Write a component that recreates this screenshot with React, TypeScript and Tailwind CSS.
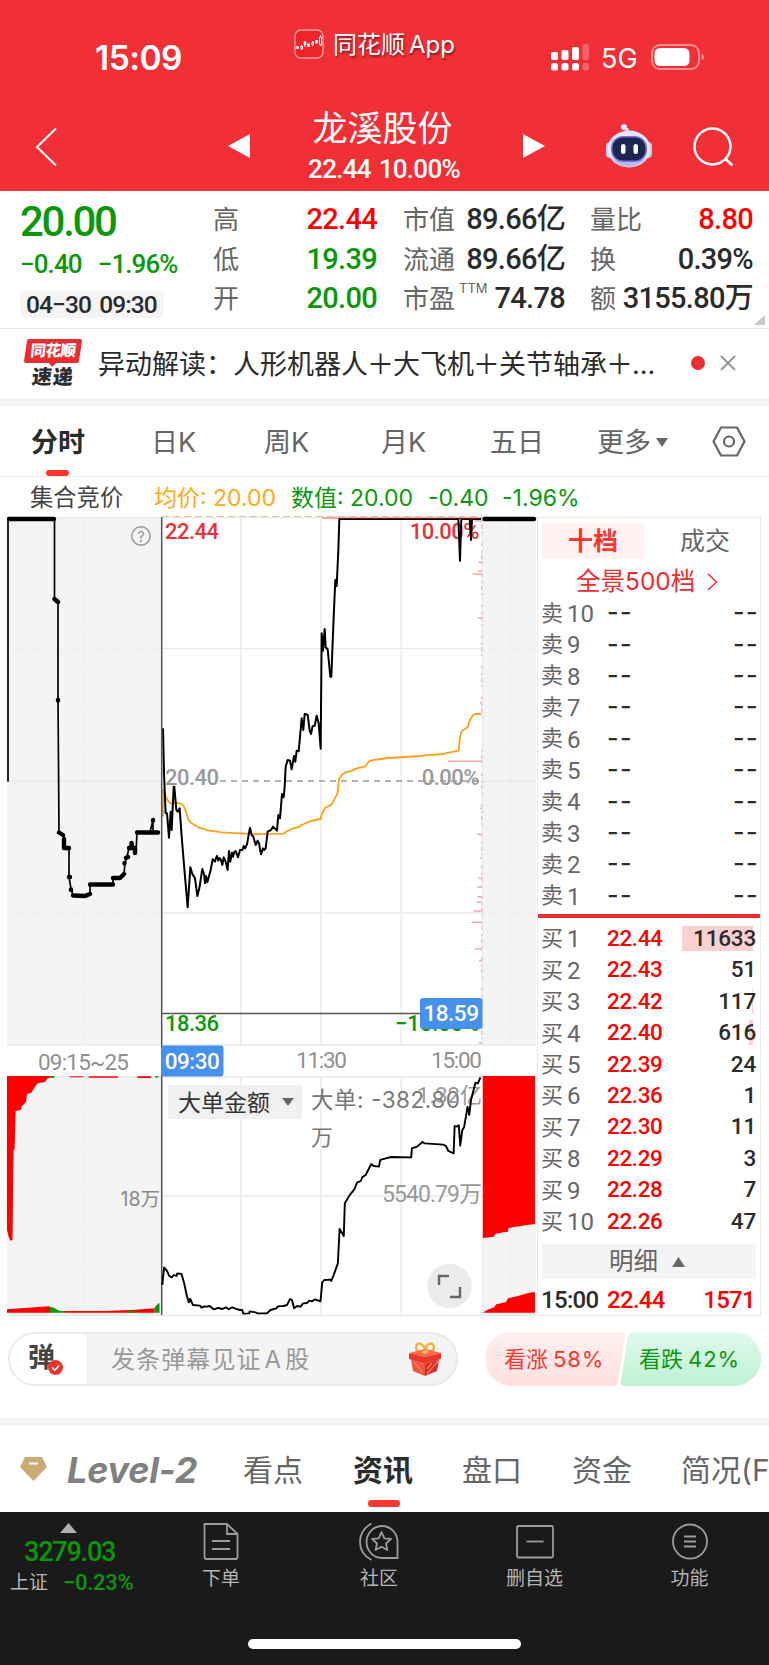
import React from 'react';

interface Level {
  label: string;
  price: string;
  volume: string;
  bar: number;
}

const num = "font-['Roboto','Noto_Sans_CJK_SC',sans-serif] font-medium";
const ui = "font-['Inter','Noto_Sans_CJK_SC',sans-serif]";

const sells = [10, 9, 8, 7, 6, 5, 4, 3, 2, 1];

const buys: Level[] = [
  { label: '1', price: '22.44', volume: '11633', bar: 71 },
  { label: '2', price: '22.43', volume: '51', bar: 0 },
  { label: '3', price: '22.42', volume: '117', bar: 1 },
  { label: '4', price: '22.40', volume: '616', bar: 4 },
  { label: '5', price: '22.39', volume: '24', bar: 0 },
  { label: '6', price: '22.36', volume: '1', bar: 0 },
  { label: '7', price: '22.30', volume: '11', bar: 0 },
  { label: '8', price: '22.29', volume: '3', bar: 0 },
  { label: '9', price: '22.28', volume: '7', bar: 0 },
  { label: '10', price: '22.26', volume: '47', bar: 0 },
];

// Price series, three units per pixel, origin at (155, 510)
const pricePoints =
  '24,655 27,790 32,910 36,910 42,983 47,905 50,960 56,830 58,830 64,900 68,905 74,895 80,980 90,1100 98,1192 106,1072 112,1092 120,1105 127,1158 133,1135 142,1077 147,1092 150,1120 153,1098 157,1117 167,1080 173,1048 180,1055 182,1046 186,1038 190,1052 194,1044 198,1050 202,1065 206,1042 212,1055 218,1080 222,1023 226,1055 231,1028 234,1040 238,1026 242,1023 249,1042 255,1020 262,1020 266,1008 270,1015 276,1003 280,980 285,953 290,975 295,980 302,1005 308,992 312,1000 318,1033 324,1015 328,1020 332,1015 338,965 348,960 354,950 366,962 370,915 375,925 381,852 386,862 389,830 392,770 398,750 405,752 410,778 417,738 421,755 425,722 431,724 440,625 445,660 449,612 458,614 464,662 468,672 473,648 479,648 485,617 491,640 497,716 500,370 504,422 509,357 512,412 518,418 526,500 529,500 536,320 541,210 545,228 550,120 553,27 910,27 915,152 919,27 944,27 948,90 951,27 978,27';

const averagePoints =
  '24,920 25,840 33,862 42,877 50,880 72,879 82,883 88,892 94,908 100,928 110,940 130,952 160,961 200,967 250,970 300,972 385,971 396,964 410,957 433,950 440,945 465,934 480,930 497,927 501,910 510,894 530,883 540,865 548,848 552,808 560,795 572,787 592,782 605,775 632,769 637,760 642,754 655,750 700,744 795,738 810,736 865,732 880,728 911,722 914,690 919,665 925,660 938,652 945,630 955,614 963,612 978,612';

// Volume bars along the right edge: [y, length]
const edgeBars = [
  [33, 22], [157, 10], [183, 12], [192, 28], [323, 12], [578, 7], [754, 103],
  [895, 6], [973, 15], [1045, 7], [1105, 10], [1132, 14], [1160, 14], [1177, 16],
  [1203, 25], [1237, 31], [1317, 21], [1352, 9], [1598, 10],
];

const flowPoints =
  '467,735 472,682 480,692 487,708 494,712 500,705 508,708 510,700 522,702 530,730 537,765 543,787 547,776 555,795 575,797 580,803 588,799 596,800 603,798 615,808 628,804 640,807 650,802 658,808 668,802 680,807 690,810 697,810 700,821 717,820 718,814 735,817 740,820 768,820 778,810 795,805 800,799 815,798 826,795 834,777 840,780 846,805 855,798 865,800 872,790 883,789 890,782 898,784 906,778 922,784 927,727 933,720 950,719 953,723 960,705 972,670 977,567 989,588 992,490 1005,467 1020,447 1027,428 1038,423 1042,412 1052,405 1060,388 1068,372 1075,378 1090,380 1094,360 1110,355 1125,351 1183,352 1185,325 1200,320 1215,306 1222,310 1275,314 1283,318 1290,333 1305,340 1308,258 1314,260 1320,256 1324,317 1330,270 1335,262 1340,232 1345,200 1350,225 1355,180 1360,160 1368,128 1375,130 1382,112';

const Robot = () => (
  <svg className="w-12 h-11" viewBox="0 0 48 44">
    <path d="M22 9V4" stroke="#dfe3fb" strokeWidth="3" />
    <circle cx="19" cy="3" r="3" fill="#dfe3fb" />
    <rect x="1" y="18" width="8" height="16" rx="4" fill="#c3c8ef" />
    <rect x="39" y="18" width="8" height="16" rx="4" fill="#c3c8ef" />
    <ellipse cx="24" cy="25" rx="21.5" ry="18.5" fill="#e4e6fa" />
    <path d="M6 34Q24 52 42 34Q24 42 6 34" fill="#b6bbe6" />
    <rect x="6" y="12" width="36" height="26" rx="12" fill="#7b6ee0" />
    <rect x="7.5" y="13.5" width="33" height="23" rx="10.5" fill="#1b2750" />
    <rect x="16" y="20" width="4.5" height="10" rx="2.2" fill="#fff" />
    <rect x="28.500" y="20" width="4.500" height="10" rx="2.2" fill="#fff" />
  </svg>
);

const Header = () => (
  <header className="h-[191px] bg-[#f12f37] text-white">
    <div className="flex h-[90px]">
      <div className={`${ui} w-[198px] pl-[95px] pt-[38px] text-[33.5px] leading-10 font-semibold tracking-[-0.5px]`}>15:09</div>
      <div className="flex w-[353px] items-start pl-24 pt-[29px]">
        <svg className="w-[30px] h-[30px]" viewBox="0 0 30 30">
          <rect x="1" y="1" width="28" height="28" rx="6" fill="#ee2429" stroke="#fa9a9d" strokeWidth="1.500" />
          <g fill="#fff" stroke="#fff" strokeWidth="1">
            <path d="M3.500 17V20M11 12.500V16M14.500 14.500V18M22.500 11V14.500" strokeWidth="2.500" />
            <path d="M7.500 16V21M11 12V18M18.500 12V17M26.500 6V17" strokeWidth="1" />
            <path d="M7 17h1.500v3H7zM18 13h1.500v3H18zM25.500 8h2v8h-2z" fill="#ee2429" />
          </g>
        </svg>
        <div className={`${ui} ml-[9px] text-[24px] leading-8 [text-shadow:1px_2px_2px_rgba(0,0,0,0.45)]`}>同花顺<span className="ml-1">App</span></div>
      </div>
      <svg className="mt-[43px] w-10 h-7" viewBox="0 0 40 28" fill="#fff">
        <rect x="0" y="9" width="7" height="8" rx="2" />
        <rect x="10.500" y="7" width="7" height="10" rx="2" />
        <rect x="21" y="4" width="7" height="13" rx="2" />
        <rect x="31.500" y="1" width="6.500" height="16" rx="2" opacity=".25" />
        <rect x="0" y="20" width="7" height="7.500" rx="2.500" />
        <rect x="10.500" y="20" width="7" height="7.500" rx="2.500" />
        <rect x="21" y="20" width="7" height="7.500" rx="2.500" />
        <rect x="31.500" y="20" width="6.500" height="7.500" rx="2.500" opacity=".25" />
      </svg>
      <div className={`${ui} ml-[10px] w-[50px] pt-[43px] text-[27px] leading-8`}>5G</div>
      <svg className="mt-[44px] w-[55px] h-[26px]" viewBox="0 0 55 26">
        <rect x="1" y="1" width="47" height="24" rx="8" fill="none" stroke="#fff" strokeOpacity=".45" strokeWidth="2" />
        <rect x="3.500" y="4" width="35" height="18" rx="5.500" fill="#fff" />
        <path d="M50.500 9.500Q53 11 53 13T50.500 16.500Z" fill="#fff" opacity=".45" />
      </svg>
    </div>
    <div className="flex h-[101px] items-start">
      <svg className="ml-[34px] mt-[37px] w-6 h-10" viewBox="0 0 24 40" fill="none" stroke="#fff" strokeWidth="2">
        <path d="M22 1.500L3 20L22 38.500" />
      </svg>
      <svg className="ml-[170px] mt-[44px] w-[22px] h-6" viewBox="0 0 22 24" fill="#fff"><path d="M0 12L22 0V24Z" /></svg>
      <div className="w-[273px] pr-[5px] text-center">
        <div className={`${ui} -ml-[3px] pt-[14px] text-[35px] leading-[48px]`}>龙溪股份</div>
        <div className={`${num} text-[26px] leading-[34px] tracking-[-0.7px] [word-spacing:2px]`}>22.44 10.00%</div>
      </div>
      <svg className="mt-[44px] w-[22px] h-6" viewBox="0 0 22 24" fill="#fff"><path d="M22 12L0 0V24Z" /></svg>
      <div className="ml-[60px] mt-[34px]"><Robot /></div>
      <svg className="ml-[40px] mt-[36px] w-[42px] h-[42px]" viewBox="0 0 42 42" fill="none" stroke="#fff" strokeWidth="2.500">
        <circle cx="19.500" cy="20.500" r="18" />
        <path d="M32 32.500L39.500 39.500" />
      </svg>
    </div>
  </header>
);

interface StatProps {
  label: React.ReactNode;
  value: string;
  color?: string;
}

const Stat = ({ label, value, color = 'text-[#2b2b2b]' }: StatProps) => (
  <div className="flex h-[39.5px] items-center justify-between">
    <span className={`${ui} text-[26px] text-[#666]`}>{label}</span>
    <span className={`${num} text-[29px] tracking-[-0.7px] ${color}`}>{value}</span>
  </div>
);

const Quote = () => (
  <section className="relative flex h-[138px] border-b border-[#e6e6e6]">
    <div className={`${num} w-[213px] pl-5 text-[#0a980a]`}>
      <div className="mt-[7px] text-[42px] leading-[48px] tracking-[-2.3px]">20.00</div>
      <div className="mt-[2px] flex gap-4 text-[26px] leading-8 tracking-[-0.9px]"><span>−0.40</span><span>−1.96%</span></div>
      <div className="mt-[11px] h-[27px] w-36 rounded-md bg-[#f4f4f4] pl-[6px] text-[24.500px] leading-[28px] tracking-[-0.9px] [word-spacing:3px] text-[#2b2b2b]">04−30 09:30</div>
    </div>
    <div className="w-[164px] pt-[9px]">
      <Stat label="高" value="22.44" color="text-[#ff0000]" />
      <Stat label="低" value="19.39" color="text-[#0a980a]" />
      <Stat label="开" value="20.00" color="text-[#0a980a]" />
    </div>
    <div className="ml-[26px] w-[162px] pt-[9px]">
      <Stat label="市值" value="89.66亿" />
      <Stat label="流通" value="89.66亿" />
      <Stat label={<>市盈<sup className="relative -top-[15px] ml-1 text-[13px] leading-none">TTM</sup></>} value="74.78" />
    </div>
    <div className="ml-[25px] w-[163px] pt-[9px]">
      <Stat label="量比" value="8.80" color="text-[#ff0000]" />
      <Stat label="换" value="0.39%" />
      <div className="tracking-[-1px]"><Stat label="额" value="3155.80万" /></div>
    </div>
    <svg className="absolute right-[4px] bottom-[3px] w-[11px] h-[10px]" viewBox="0 0 11 10"><path d="M11 0V10H0Z" fill="#c8c8c8" /></svg>
  </section>
);

const News = () => (
  <section className="flex h-[77px] items-start border-b-8 border-[#f4f4f4]">
    <div className={`${ui} relative ml-6 mt-[10px] w-[58px] text-center`}>
      <svg className="absolute left-0 top-0 w-[58px] h-7" viewBox="0 0 58 28"><path d="M5 0H56Q58 0 58 2L55 22Q55 24 53 24H32L28 28L25 24H2Q0 24 0 22L3 2Q3 0 5 0Z" fill="#e92e32" /></svg>
      <div className="relative -skew-x-6 text-[15.5px] leading-6 font-black tracking-[-0.5px] text-white">同花顺</div>
      <div className="-skew-x-6 text-[20px] leading-[28px] font-black tracking-[1px] text-[#2b2b2b]">速递</div>
    </div>
    <div className={`${ui} ml-4 mt-4 w-[576px] text-[27px] leading-10 whitespace-nowrap text-[#2b2b2b]`}>
      异动解读：人形机器人<span className="-mx-px">＋</span>大飞机<span className="-mx-px">＋</span>关节轴承<span className="-mx-px">＋</span>...
    </div>
    <span className="ml-[17px] mt-[27px] h-[14px] w-[14px] rounded-full bg-[#ea2e31]" />
    <svg className="ml-[15px] mt-[26px] w-4 h-4" viewBox="0 0 16 16" stroke="#999" strokeWidth="2"><path d="M1 1L15 15M15 1L1 15" /></svg>
  </section>
);

const PeriodTabs = () => (
  <nav className={`${ui} flex h-[71px] items-start border-b border-[#ebebeb] text-[27px] leading-[73px] text-[#666]`}>
    <div className="relative ml-[31px] h-[70px] w-[120px] font-bold text-[#2b2b2b]">
      分时
      <span className="absolute left-[15px] bottom-0 h-[6px] w-[23px] rounded-sm bg-[#fb3730]" />
    </div>
    <div className="w-[113px]">日K</div>
    <div className="w-[117px]">周K</div>
    <div className="w-[109px]">月K</div>
    <div className="w-[107px]">五日</div>
    <div className="flex w-[115px] items-center">更多<svg className="ml-[5px] w-3 h-[9px]" viewBox="0 0 12 9"><path d="M0 0H12L6 9Z" fill="#666" /></svg></div>
    <svg className="mt-[20px] w-[34px] h-[31px]" viewBox="0 0 34 31" fill="none" stroke="#666" strokeWidth="2.200">
      <path d="M9 1.500H25L32.500 15.500L25 29.500H9L1.500 15.500Z" strokeLinejoin="round" />
      <circle cx="17" cy="15.500" r="5" />
    </svg>
  </nav>
);

const Legend = () => (
  <div className={`${ui} flex h-[39px] text-[23px] leading-[42px] whitespace-nowrap text-[#0a980a]`}>
    <span className="ml-[30px] w-[124px] text-[23.3px] text-[#444]">集合竞价</span>
    <span className="w-[137px] text-[#ffaa14]">均价: 20.00</span>
    <span className="w-[137px]">数值: 20.00</span>
    <span className="w-[74px]">-0.40</span>
    <span>-1.96%</span>
  </div>
);

const Chart = () => (
  <svg className="w-[537px] h-[803px] shrink-0" viewBox="0 516 537 803">
    <rect x="7" y="517" width="154" height="528" fill="#f4f4f4" />
    <rect x="483" y="517" width="53" height="528" fill="#f4f4f4" />
    <rect x="7" y="1077" width="154" height="238" fill="#f4f4f4" />
    <rect x="483" y="1077" width="53" height="238" fill="#f4f4f4" />
    <g stroke="#e9e9e9" strokeWidth="1.300" fill="none">
      <path d="M7 517.500H537M7 781H161M483 781H536M162 648.500H482M162 913H482M7 1045H536M7 1077H536M162 1196H482M7 1315.500H536" />
      <path d="M240.700 517V1045M321 517V1045M401.300 517V1045M482.500 517V1045M240.700 1077V1315M321 1077V1315M401.300 1077V1315M482.500 1077V1315" />
      <path d="M84 517V1045M510.700 517V1045M84 1077V1315M510.700 1077V1315M7 650H161M7 914H161M483 650H536M483 914H536M7 1195H161" strokeDasharray="2 3" />
    </g>
    <path d="M162 516.500H482" stroke="#dcc59c" strokeWidth="1.200" strokeDasharray="7 4" />
    <path d="M220 781H482" stroke="#999" strokeWidth="1.300" strokeDasharray="6 5" />

    <g className={num} fontSize="22" letterSpacing="-0.5">
      <text x="165" y="539" fill="#ee3134">22.44</text>
      <text x="479" y="539" fill="#ee3134" textAnchor="end">10.00%</text>
      <text x="165" y="785" fill="#999">20.40</text>
      <text x="479" y="785" fill="#999" textAnchor="end">0.00%</text>
      <text x="165" y="1031" fill="#0a980a">18.36</text>
      <text x="479" y="1031" fill="#0a980a" textAnchor="end" textLength="84">−10.00%</text>
    </g>

    <g stroke="#000" fill="none" strokeLinejoin="round" strokeLinecap="round">
      <path d="M8 781V519H54.500V599L58 601V700L59 832L64 836V848H69V877L71 889L73 895L85 896L90 894V884H113V878H120L124 874L125 863L127 857L129 848L132 842L136 853L137 832H150L153 820V832H159" strokeWidth="1.700" />
      <path d="M9 519H54M54.500 599L58 602M58 700V700.500M59 832.500L63 835M64 839V848H69M69 877H70M71 889.500V890M73 895.500L85 896L90 894M90 884.500H113M113 878H120L124 874M124.500 863V863.500M126 858L128 857M129 848H135V853M131.500 843V843.500M137 832.500H158M153 820V820.500M484.500 519H534" strokeWidth="4.400" />
    </g>

    <path d="M322 518H482" stroke="#f8a9ab" strokeWidth="2" />
    <g transform="translate(155 510) scale(.33333)" fill="none">
      <path d={edgeBars.map(([y, length]) => `M${981 - length} ${y}H981`).join('')} stroke="#f7a6a8" strokeWidth="4.500" />
      <path d="M980 30V620M980 720V1610" stroke="#f7b4b6" strokeWidth="4" strokeDasharray="6 8 12 10 4 30 8 14" />
      <polyline points={averagePoints} stroke="#ff9f1a" strokeWidth="5.500" strokeLinejoin="round" />
      <polyline points={pricePoints} stroke="#000" strokeWidth="6" strokeLinejoin="round" />
    </g>
    <path d="M340 518.500H480" stroke="#6e1014" strokeWidth="1" />

    <path d="M161.700 517V1315M162 1013.500H420" stroke="#555" strokeWidth="1.500" />
    <rect x="420" y="998" width="62.500" height="31" rx="3" fill="#4690ee" />
    <rect x="161" y="1045.500" width="62.500" height="31" rx="3" fill="#4690ee" />
    <g className={num} fontSize="22.500" letterSpacing="-0.5">
      <text x="451" y="1021" fill="#fff" textAnchor="middle">18.59</text>
      <text x="192" y="1069" fill="#fff" textAnchor="middle">09:30</text>
    </g>
    <g className="font-['Roboto',sans-serif]" fontSize="22.500" fill="#8f8f8f">
      <text x="38" y="1070" textLength="91">09:15~25</text>
      <text x="296" y="1068" textLength="51">11:30</text>
      <text x="431" y="1068" textLength="51">15:00</text>
    </g>

    <g transform="translate(0 1040) scale(.3476 .33333)">
      <path d="M20 108H150L148 112L135 116L130 126L108 130L100 142L90 158L78 162L75 185L62 200L60 210L45 213L42 330H39L36 600L30 602L25 590L20 570Z" fill="#ff0000" />
      <path d="M20 818V808L140 799L146 802V818ZM185 818V813L300 813L390 809L445 805V818ZM200 109H240V112H200ZM255 109H340V113H255ZM395 109H435V114H395Z" fill="#ff0000" />
      <path d="M144 800L155 803L170 812L186 814V818H144ZM445 802L456 790H459V818H445ZM368 813H388V818H368ZM144 108H156V114H148ZM445 108H457L450 115Z" fill="#0a980a" />
      <path d="M1389 108H1539V553L1520 554L1500 558L1475 562L1462 565V575L1440 578L1425 582L1420 590L1389 594Z" fill="#ff0000" />
      <path d="M1389 818L1405 808L1420 803L1428 793L1455 787L1462 775L1490 768L1510 762L1530 757H1539V818Z" fill="#ff0000" />
    </g>
    <text className={ui} x="160" y="1206" fontSize="19.500" fill="#888" textAnchor="end">18万</text>

    <rect x="168" y="1085" width="134" height="34" rx="3" fill="#f0f0f0" />
    <g className={ui}>
      <text x="178" y="1111" fontSize="23" fill="#333">大单金额</text>
      <text x="311" y="1107.500" fontSize="22.500" fill="#777" textLength="149">大单: -382.80</text>
      <text x="311" y="1144.500" fontSize="22" fill="#777">万</text>
    </g>
    <path d="M282 1098H294L288 1106Z" fill="#666" />
    <g className="font-['Roboto','Noto_Sans_CJK_SC',sans-serif]" fontSize="23" fill="#999" textAnchor="end">
      <text x="482" y="1103" fontSize="22">1.32亿</text>
      <text x="482" y="1202" textLength="100">5540.79万</text>
    </g>
    <polyline transform="translate(0 1040) scale(.3476 .33333)" points={flowPoints} fill="none" stroke="#000" strokeWidth="5.500" strokeLinejoin="round" />
    <circle cx="449.500" cy="1286" r="22.200" fill="#ebebeb" />
    <path d="M439 1285V1276H449M460 1287V1297H450" fill="none" stroke="#666" strokeWidth="2.400" />

    <circle cx="141" cy="536" r="9.200" fill="none" stroke="#999" strokeWidth="1.500" />
    <text className={ui} x="141" y="541.500" fontSize="15" fill="#999" textAnchor="middle">?</text>
  </svg>
);

const OrderBook = () => (
  <aside className={`${ui} mt-px h-[799px] w-[224px] border border-[#e8e8e8] pt-[5px] text-[23px] text-[#666]`}>
    <div className="ml-1 flex text-center text-[25px] leading-9">
      <div className="w-[102px] shrink-0 rounded bg-[#fff2f1] font-bold text-[#fb3730]">十档</div>
      <div className="w-[124px] shrink-0 pr-[2px]">成交</div>
    </div>
    <div className="ml-[38px] flex h-[38.300px] items-center pt-[7px] text-[24.5px] text-[#ee2d2d]">
      全景500档
      <svg className="ml-3 w-[11px] h-[18px]" viewBox="0 0 11 18" fill="none" stroke="#ee2d2d" strokeWidth="1.500"><path d="M1 1L9.500 9L1 17" /></svg>
    </div>
    {sells.map((level) => (
      <div key={level} className="flex h-[31.4px] items-center pl-[3px] pr-px">
        <span className="w-[26px] text-[22px]">卖</span>
        <span className="w-[40px] pt-[2px] font-['Roboto'] text-[24px]">{level}</span>
        <span className="text-[25px] font-medium tracking-[1.5px] text-[#2b2b2b]">--</span>
        <span className="ml-auto text-[25px] font-medium tracking-[1.5px] text-[#2b2b2b]">--</span>
      </div>
    ))}
    <div className="mt-[3px] mb-[5px] h-1 bg-[#ea2f32]" />
    {buys.map((row) => (
      <div key={row.label} className="relative flex h-[31.4px] items-center pl-[3px] pr-1">
        {row.bar > 0 && <span className="absolute right-[7px] top-[3px] h-[25px] bg-[#fbd0d1]" style={{ width: row.bar }} />}
        <span className="w-[26px] text-[22px]">买</span>
        <span className="w-[40px] pt-px font-['Roboto'] text-[24px]">{row.label}</span>
        <span className={`${num} text-[22.5px] tracking-[-0.4px] text-[#ff0000]`}>{row.price}</span>
        <span className={`${num} relative ml-auto text-[22.5px] tracking-[-0.2px] text-[#2b2b2b]`}>{row.volume}</span>
      </div>
    ))}
    <div className="mx-1 mt-[7px] flex h-[35px] items-center justify-center gap-[14px] bg-[#f4f4f4] pr-1 text-[24.5px]">
      明细
      <svg className="w-[13px] h-[10px]" viewBox="0 0 13 10"><path d="M0 10H13L6.500 0Z" fill="#666" /></svg>
    </div>
    <div className={`${num} flex pl-[3px] pr-[5px] pt-px text-[24px] leading-10 tracking-[-0.7px] text-[#ff0000]`}>
      <span className="w-[66px] text-[#2b2b2b]">15:00</span>
      <span>22.44</span>
      <span className="ml-auto">1571</span>
    </div>
  </aside>
);

const Gift = () => (
  <svg className="w-8 h-[34px]" viewBox="0 0 32 34">
    <path d="M16 9Q7 11 7 5Q8 0 12 2Q16 4 16 9Q16 4 20 2Q24 0 25 5Q25 11 16 9Z" fill="none" stroke="#f4b53c" strokeWidth="2.500" />
    <path d="M0 11L16 7L32 11L16 15Z" fill="#f9694c" />
    <path d="M0 11L16 15L32 11V17L16 22L0 17Z" fill="#e8382c" />
    <path d="M2 17.500L16 22V34L4 29Z" fill="#f2543d" />
    <path d="M30 17.500L16 22V34L28 29Z" fill="#d92d27" />
    <path d="M18 32L29 19M18 27L23 21M5 20L14 31" stroke="#ff8159" strokeWidth="1.200" />
    <path d="M12 10L16 8L20 10L16 12Z" fill="#f9c64f" />
  </svg>
);

const Barrage = () => (
  <section className={`${ui} flex h-[107px] border-b-8 border-[#f4f4f4] pl-2 pt-[13px]`}>
    <div className="flex h-[54px] w-[450px] items-center overflow-hidden rounded-full border-2 border-[#eaeaea] bg-[#f4f4f4]">
      <div className="relative h-full w-[76px] bg-white pl-[18px] text-[27px] leading-[47px] font-bold text-[#444]">
        弹
        <svg className="absolute left-[38px] top-[26px] w-[15px] h-[15px]" viewBox="0 0 15 15"><circle cx="7.500" cy="7.500" r="7.500" fill="#f0322f" /><path d="M4 7.500L6.800 10.300L11 5.500" fill="none" stroke="#fff" strokeWidth="1.600" /></svg>
      </div>
      <span className="ml-[25px] w-[298px] pt-[2px] text-[24px] tracking-[1.1px] text-[#999]">发条弹幕见证<span className="mx-[3px]">A</span>股</span>
      <Gift />
    </div>
    <div className="relative ml-[27px] flex h-[54px] w-[276px] text-[22px] leading-[55px]">
      <svg className="absolute inset-0 w-[276px] h-[54px]" viewBox="0 0 276 54">
        <defs>
          <linearGradient id="rise" x2="0" y2="1"><stop stopColor="#fff0ef" /><stop offset="1" stopColor="#fee0de" /></linearGradient>
          <linearGradient id="fall" x2="0" y2="1"><stop stopColor="#e2f9ed" /><stop offset="1" stopColor="#bdf1d4" /></linearGradient>
        </defs>
        <path d="M27 0H137Q141 0 140 4L133 50Q132 54 128 54H27A27 27 0 0 1 27 0Z" fill="url(#rise)" />
        <path d="M149 0H249A27 27 0 0 1 249 54H139Q135 54 136 50L143 4Q144 0 149 0Z" fill="url(#fall)" />
      </svg>
      <span className="relative ml-[19px] w-[135px] text-[#fb3730]">看涨<span className="ml-[5px] tracking-[0.9px]">58%</span></span>
      <span className="relative text-[#0a980a]">看跌<span className="ml-[5px] tracking-[0.9px]">42%</span></span>
    </div>
  </section>
);

const InfoTabs = () => (
  <nav className={`${ui} flex h-[86px] overflow-hidden text-[30px] leading-[88px] whitespace-nowrap text-[#666]`}>
    <svg className="ml-5 mt-[31px] w-[27px] h-6 shrink-0" viewBox="0 0 27 24"><path d="M5 0H22L27 10L13.500 24L0 10Z" fill="#cbaa74" /><path d="M9 6.500H18" stroke="#fff" strokeWidth="2" /></svg>
    <div className="ml-5 w-[176px] shrink-0 text-[36px] font-bold italic tracking-[-0.2px] text-[#808080]">Level-2</div>
    <div className="w-[110px] shrink-0">看点</div>
    <div className="relative w-[109px] shrink-0 font-bold text-[#2b2b2b]">
      资讯
      <span className="absolute left-[15px] top-[74px] h-[7px] w-8 rounded-sm bg-[#fb3730]" />
    </div>
    <div className="w-[110px] shrink-0">盘口</div>
    <div className="w-[109px] shrink-0">资金</div>
    <div className="shrink-0">简况(F10)</div>
  </nav>
);

const Footer = () => (
  <footer className={`${ui} h-[153px] bg-[#1a1a1a] text-[19px] text-[#b5b5b5]`}>
    <div className="flex h-[127px] pt-[11px]">
      <div className={`${num} w-[142px]`}>
        <svg className="ml-[60px] w-[17px] h-[10px]" viewBox="0 0 17 10"><path d="M0 10H17L8.500 0Z" fill="#b0b0b0" /></svg>
        <div className="ml-6 mt-[3px] text-[27px] leading-8 tracking-[-1.2px] text-[#0a980a]">3279.03</div>
        <div className="ml-[10px] mt-px flex leading-[28px]">
          <span className="w-[53px] font-normal">上证</span>
          <span className="text-[22px] tracking-[-0.3px] text-[#0a980a]">−0.23%</span>
        </div>
      </div>
      <div className="flex w-[158px] flex-col items-center">
        <svg className="w-9 h-[38px]" viewBox="0 0 36 38" fill="none" stroke="#9b9b9b" strokeWidth="1.800">
          <path d="M1.500 1H24L34.500 11V34Q34.500 36 32.500 36H3.500Q1.500 36 1.500 34ZM24 1V11H34.500M9 18H27M9 26H27" />
        </svg>
        <span className="mt-1 leading-7">下单</span>
      </div>
      <div className="flex w-[158px] flex-col items-center">
        <svg className="w-10 h-[38px]" viewBox="0 0 40 38" fill="none" stroke="#9b9b9b" strokeWidth="1.800">
          <path d="M12.500 .500Q1 7 1 19T12.500 37M38.500 35V18A15.500 16 0 1 0 23 35Z" />
          <path d="M22.500 9L25.300 15.300L32 16L27 20.500L28.400 27L22.500 23.700L16.600 27L18 20.500L13 16L19.700 15.300Z" strokeLinejoin="round" />
        </svg>
        <span className="mt-1 leading-7">社区</span>
      </div>
      <div className="flex w-[153px] flex-col items-center">
        <svg className="w-[38px] h-[38px]" viewBox="0 0 38 38" fill="none" stroke="#9b9b9b" strokeWidth="1.800">
          <rect x="1" y="3" width="36" height="31.500" rx="1.500" />
          <path d="M10.500 18.500H27.500" />
        </svg>
        <span className="mt-1 leading-7">删自选</span>
      </div>
      <div className="flex w-[157px] flex-col items-center">
        <svg className="w-[38px] h-[38px]" viewBox="0 0 38 38" fill="none" stroke="#9b9b9b" strokeWidth="1.800">
          <circle cx="19" cy="18.500" r="17" />
          <path d="M13 13.500H25M13 18.500H25M13 23.500H25" />
        </svg>
        <span className="mt-1 leading-7">功能</span>
      </div>
    </div>
    <div className="mx-auto h-[10px] w-[273px] rounded-full bg-white" />
  </footer>
);

const App: React.FC = () => {
  return (
    <div className="w-[769px] h-[1665px] overflow-hidden bg-white">
      <Header />
      <Quote />
      <News />
      <PeriodTabs />
      <Legend />
      <div className="flex h-[803px]">
        <Chart />
        <OrderBook />
      </div>
      <Barrage />
      <InfoTabs />
      <Footer />
    </div>
  );
};

export default App;
